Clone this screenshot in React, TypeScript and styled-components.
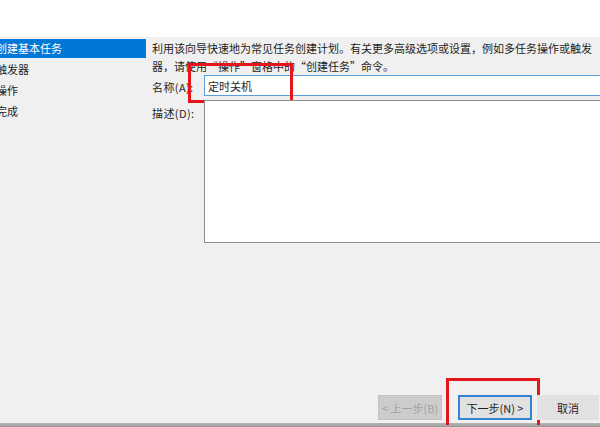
import React from 'react'
import styled, { createGlobalStyle } from 'styled-components'

const GlobalStyle = createGlobalStyle`
  html, body {
    margin: 0;
    padding: 0;
    background: #f0f0f0;
  }
  body {
    font-family: "Noto Sans CJK SC", "Liberation Sans", sans-serif;
  }
`

const Window = styled.div`
  width: 600px;
  height: 427px;
  overflow: hidden;
  display: flex;
  flex-direction: column;
  background: #f0f0f0;
  font-size: 11px;
  color: #1e1e1e;
`

const Header = styled.div`
  flex: none;
  height: 37px;
  background: #ffffff;
`

const Body = styled.div`
  flex: 1;
  min-height: 0;
  display: flex;
`

const Nav = styled.ul`
  flex: none;
  width: 146px;
  margin: 0;
  padding: 2px 0 0;
  list-style: none;
`

const NavItem = styled.li<{ $active?: boolean }>`
  height: 19px;
  line-height: 19px;
  margin-bottom: 2px;
  text-indent: -4px;
  white-space: nowrap;
  overflow: hidden;
  background: ${(p) => (p.$active ? '#0078d7' : 'transparent')};
  color: ${(p) => (p.$active ? '#ffffff' : '#1e1e1e')};
`

const Main = styled.div`
  flex: 1;
  min-width: 0;
  display: flex;
  flex-direction: column;
  padding: 2px 0 0 6px;
`

const Intro = styled.p`
  width: 446px;
  margin: 0;
  line-height: 18px;
`

const FieldRow = styled.div<{ $top?: boolean }>`
  display: grid;
  grid-template-columns: 52px 430px;
  align-items: ${(p) => (p.$top ? 'start' : 'center')};
  margin-top: ${(p) => (p.$top ? '4px' : '0')};
`

const Label = styled.label<{ $top?: boolean }>`
  line-height: 18px;
  padding-top: ${(p) => (p.$top ? '4px' : '2px')};
  letter-spacing: 0.4px;
  white-space: nowrap;
`

const FieldWrap = styled.div`
  position: relative;
`

const TextInput = styled.input`
  display: block;
  box-sizing: border-box;
  width: 100%;
  height: 21px;
  margin: 0;
  padding: 0 3px;
  border: 1px solid #5a9fdc;
  background: #ffffff;
  font: inherit;
  font-size: 11px;
  color: #1e1e1e;
  outline: none;
`

const TextArea = styled.textarea`
  display: block;
  box-sizing: border-box;
  width: 100%;
  height: 143px;
  margin: 0;
  padding: 2px 3px;
  border: 1px solid #8c8c8c;
  border-right: none;
  background: #ffffff;
  font: inherit;
  resize: none;
  outline: none;
`

const Highlight = styled.span<{ $open?: boolean }>`
  position: absolute;
  box-sizing: border-box;
  border: 3px solid #e3171b;
  border-bottom-width: ${(p) => (p.$open ? '0' : '3px')};
  pointer-events: none;
`

const Footer = styled.div`
  margin-top: auto;
  display: flex;
  justify-content: flex-end;
  align-items: flex-end;
  padding: 0 1px 3px 0;
`

const Button = styled.button<{ $kind?: 'default' | 'disabled' | 'normal'; $w: number }>`
  position: relative;
  box-sizing: border-box;
  width: ${(p) => p.$w}px;
  height: 25px;
  margin: 0;
  padding: 0;
  font: inherit;
  font-size: 11px;
  background: ${(p) => (p.$kind === 'disabled' ? '#cccccc' : '#e1e1e1')};
  color: ${(p) => (p.$kind === 'disabled' ? '#a3a3a3' : '#1e1e1e')};
  border: ${(p) =>
    p.$kind === 'default' ? '2px solid #2f84d3' : p.$kind === 'disabled' ? '1px solid #c2c2c2' : '1px solid #e1e1e1'};
`

const Gap = styled.div<{ $w: number }>`
  width: ${(p) => p.$w}px;
  flex: none;
`

const BottomEdge = styled.div`
  flex: none;
  height: 4px;
  background: linear-gradient(#b4b4b4, #9a9a9a);
`

const steps = ['创建基本任务', '触发器', '操作', '完成']

export default function App() {
  return (
    <Window>
      <GlobalStyle />
      <Header />
      <Body>
        <Nav>
          {steps.map((s, i) => (
            <NavItem key={s} $active={i === 0}>
              {s}
            </NavItem>
          ))}
        </Nav>
        <Main>
          <Intro>
            利用该向导快速地为常见任务创建计划。有关更多高级选项或设置，例如多任务操作或触发器，请使用“操作”窗格中的“创建任务”命令。
          </Intro>
          <FieldRow>
            <Label htmlFor="task-name">名称(A):</Label>
            <FieldWrap>
              <TextInput id="task-name" defaultValue="定时关机" />
              <Highlight style={{ left: -16, top: -12, width: 105, height: 40 }} />
            </FieldWrap>
          </FieldRow>
          <FieldRow $top>
            <Label $top htmlFor="task-desc">
              描述(D):
            </Label>
            <FieldWrap>
              <TextArea id="task-desc" />
            </FieldWrap>
          </FieldRow>
          <Footer>
            <Button $kind="disabled" $w={64} disabled>
              &lt; 上一步(B)
            </Button>
            <Gap $w={16} />
            <Button $kind="default" $w={74}>
              下一步(N) &gt;
              <Highlight $open style={{ left: -14, top: -19, width: 94, height: 47 }} />
            </Button>
            <Gap $w={5} />
            <Button $kind="normal" $w={62}>
              取消
            </Button>
          </Footer>
        </Main>
      </Body>
      <BottomEdge />
    </Window>
  )
}
